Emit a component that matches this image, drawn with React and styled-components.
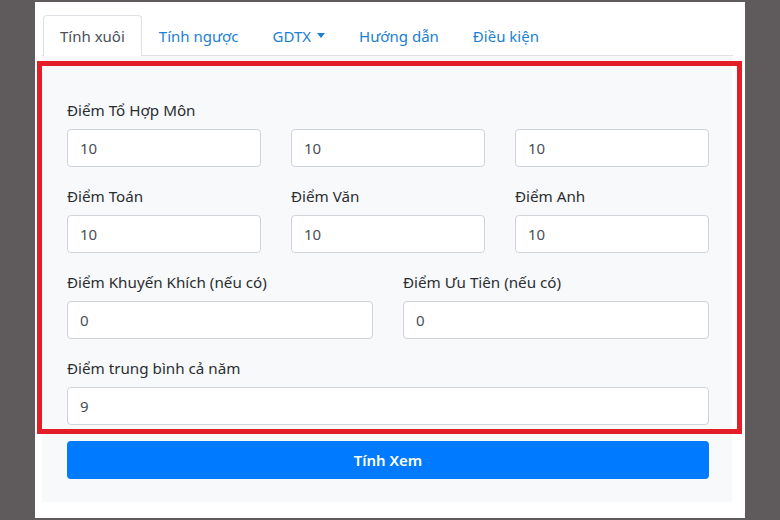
import React from "react";
import styled, { createGlobalStyle } from "styled-components";

const Global = createGlobalStyle`
  html, body { margin: 0; padding: 0; }
  body {
    background: #5f5b5c;
    font-family: "Noto Sans", "Open Sans", sans-serif;
    color: #212529;
  }
  * { box-sizing: border-box; }
`;

const Panel = styled.div`
  margin: 2px 0 0 35px;
  width: 710px;
  height: 516px;
  background: #ffffff;
  padding: 13px 13px 0 7px;
`;

const Nav = styled.ul`
  list-style: none;
  margin: 0;
  padding: 0 0 0 1px;
  display: flex;
  border-bottom: 1px solid #dee2e6;
  width: 691px;
`;

const Tab = styled.li`
  padding: 8px 16px;
  line-height: 24px;
  font-size: 15px;
  color: ${(p) => (p.$active ? "#495057" : "#1a7fd6")};
  background: ${(p) => (p.$active ? "#ffffff" : "transparent")};
  border: 1px solid ${(p) => (p.$active ? "#dee2e6" : "transparent")};
  border-bottom: none;
  border-radius: 4px 4px 0 0;
  margin-bottom: -1px;
  display: flex;
  align-items: center;
  white-space: nowrap;
`;

const Caret = styled.span`
  display: inline-block;
  margin-left: 6px;
  width: 0;
  height: 0;
  border-left: 4.5px solid transparent;
  border-right: 4.5px solid transparent;
  border-top: 5px solid currentColor;
  transform: translateY(-1px);
`;

const Card = styled.div`
  position: relative;
  width: 690px;
  height: 446px;
  background: #f8f9fa;
  padding: 43px 23px 0 25px;
  display: flex;
  flex-direction: column;
  gap: 18px;
`;

const Row = styled.div`
  display: grid;
  grid-template-columns: repeat(${(p) => p.$cols}, 1fr);
  column-gap: 30px;
`;

const Field = styled.div`
  display: flex;
  flex-direction: column;
`;

const Label = styled.label`
  font-size: 15.2px;
  line-height: 22px;
  margin-bottom: 8px;
  color: #2a2e33;
  white-space: nowrap;
  min-height: 22px;
`;

const Input = styled.div`
  height: 38px;
  border: 1px solid #ced4da;
  border-radius: 4px;
  background: #ffffff;
  padding: 0 12px;
  display: flex;
  align-items: center;
  font-size: 15px;
  color: #495057;
`;

const Button = styled.div`
  margin-top: -2px;
  height: 38px;
  border-radius: 4px;
  background: #007bff;
  color: #ffffff;
  font-size: 15px;
  font-weight: 600;
  display: flex;
  align-items: center;
  justify-content: center;
`;

const Highlight = styled.div`
  position: absolute;
  left: -5px;
  top: 5px;
  width: 705px;
  height: 373px;
  border: 5px solid #e31e26;
  pointer-events: none;
`;

const F = ({ label, value }) => (
  <Field>
    <Label>{label}</Label>
    <Input>{value}</Input>
  </Field>
);

export default function App() {
  return (
    <>
      <Global />
      <Panel>
        <Nav>
          <Tab $active>Tính xuôi</Tab>
          <Tab>Tính ngược</Tab>
          <Tab>
            GDTX<Caret />
          </Tab>
          <Tab>Hướng dẫn</Tab>
          <Tab>Điều kiện</Tab>
        </Nav>
        <Card>
          <Row $cols={3}>
            <F label="Điểm Tổ Hợp Môn" value="10" />
            <F label="" value="10" />
            <F label="" value="10" />
          </Row>
          <Row $cols={3}>
            <F label="Điểm Toán" value="10" />
            <F label="Điểm Văn" value="10" />
            <F label="Điểm Anh" value="10" />
          </Row>
          <Row $cols={2}>
            <F label="Điểm Khuyến Khích (nếu có)" value="0" />
            <F label="Điểm Ưu Tiên (nếu có)" value="0" />
          </Row>
          <Row $cols={1}>
            <F label="Điểm trung bình cả năm" value="9" />
          </Row>
          <Button>Tính Xem</Button>
          <Highlight />
        </Card>
      </Panel>
    </>
  );
}
